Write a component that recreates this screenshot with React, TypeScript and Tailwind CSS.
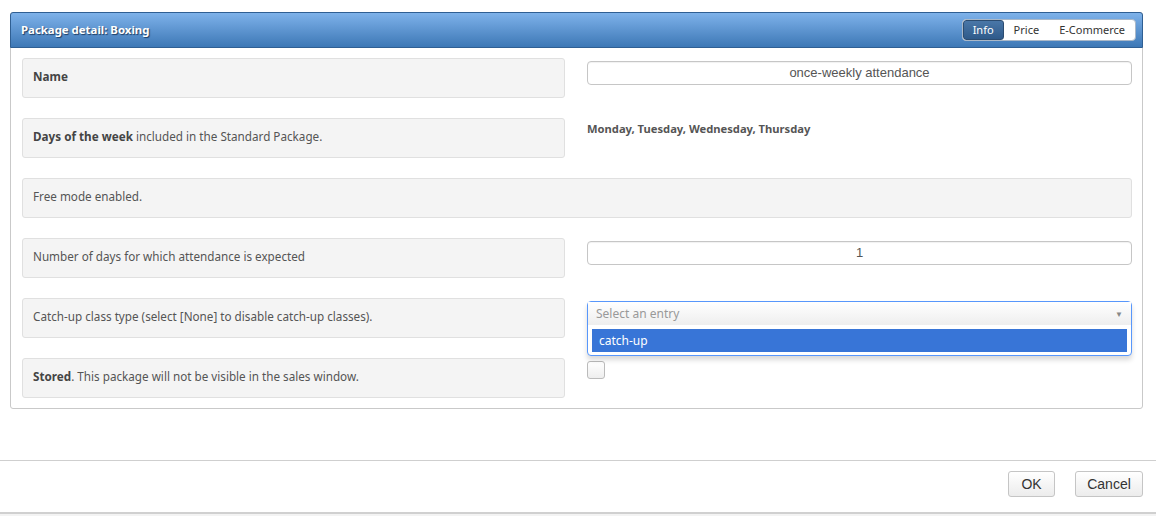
import React from 'react'

const labelBox =
  'h-[40px] flex items-center px-[10px] pb-[3px] bg-[#f4f4f4] border border-[#e0e0e0] rounded-[3px] text-[11.7px] text-[#555]'

const inputClass =
  'w-full h-[24px] rounded-[4px] border border-[#c6c6c6] bg-white text-center text-[13px] text-[#555] font-["Liberation_Sans",Arial,sans-serif] shadow-[inset_0_1px_1px_rgba(0,0,0,0.06)]'

function Row({ label, children }: { label: React.ReactNode; children?: React.ReactNode }) {
  return (
    <div className="flex gap-[22px]">
      <div className={`${labelBox} w-[543px] shrink-0`}>{label}</div>
      <div className="flex-1">{children}</div>
    </div>
  )
}

export default function App() {
  return (
    <div className="w-[1156px] h-[516px] bg-white font-['Noto_Sans',sans-serif] relative overflow-hidden">
      <div className="pt-[12px] px-[10px] pr-[13px]">
        <div className="border border-[#c9c9c9] rounded-[3px] h-[397px]">
          <div className="h-[36px] -mx-px -mt-px flex items-center justify-between px-[10px] pr-[6px] rounded-t-[3px] border border-[#2f5f93] bg-gradient-to-b from-[#7eb2ea] to-[#3d78b6]">
            <span className="text-white text-[11.4px] font-bold [text-shadow:1px_1px_1px_#1d3d63]">
              Package detail: Boxing
            </span>
            <div className="flex h-[22px] bg-white rounded-[4px] border border-[#aab8c8] text-[11px] text-[#333] overflow-hidden">
              <span className="px-[9px] flex items-center bg-gradient-to-b from-[#4a77a8] to-[#2f5a8a] text-white border border-[#2c4c70] rounded-[3px]">
                Info
              </span>
              <span className="px-[10px] flex items-center">Price</span>
              <span className="px-[10px] flex items-center">E-Commerce</span>
            </div>
          </div>

          <div className="pl-[11px] pr-[10px] pt-[10px] flex flex-col gap-[20px]">
            <Row label={<b className="text-[#444]">Name</b>}>
              <div className="pt-[3px]">
                <div className={`${inputClass} flex items-center justify-center`}>once-weekly attendance</div>
              </div>
            </Row>
            <Row
              label={
                <span>
                  <b className="text-[#444]">Days of the week</b> included in the Standard Package.
                </span>
              }
            >
              <div className="pt-[3px] text-[11.2px] font-bold text-[#555]">Monday, Tuesday, Wednesday, Thursday</div>
            </Row>
            <div className={labelBox}>Free mode enabled.</div>
            <Row label="Number of days for which attendance is expected">
              <div className="pt-[3px]">
                <div className={`${inputClass} flex items-center justify-center`}>1</div>
              </div>
            </Row>
            <Row label="Catch-up class type (select [None] to disable catch-up classes).">
              <div className="pt-[3px] relative z-10">
                <div className="absolute left-0 right-0 top-[3px] border border-[#5897fb] rounded-[4px] bg-white shadow-[0_4px_5px_rgba(0,0,0,0.15)]">
                  <div className="h-[23px] flex items-center justify-between pl-[8px] pr-[8px] bg-gradient-to-b from-[#ffffff] to-[#eeeeee] text-[12px] text-[#999]">
                    <span>Select an entry</span>
                    <span className="text-[8px] text-[#888]">▼</span>
                  </div>
                  <div className="px-[4px] pt-[4px] pb-[3px]">
                    <div className="h-[23px] flex items-center px-[7px] bg-[#3875d7] text-white text-[12px]">catch-up</div>
                  </div>
                </div>
              </div>
            </Row>
            <Row
              label={
                <span>
                  <b className="text-[#444]">Stored</b>. This package will not be visible in the sales window.
                </span>
              }
            >
              <div className="pt-[3px]">
                <div className="w-[18px] h-[18px] border border-[#bbb] rounded-[3px] bg-gradient-to-b from-white to-[#eee]" />
              </div>
            </Row>
          </div>
        </div>
      </div>

      <div className="mt-[51px] border-t border-[#cfcfcf] h-[52px] flex items-start pt-[10px] justify-end gap-[20px] pr-[13px]">
        <button className="h-[26px] w-[47px] rounded-[3px] border border-[#c5c5c5] bg-gradient-to-b from-white to-[#ececec] text-[14px] text-[#333] font-['Liberation_Sans',Arial,sans-serif]">
          OK
        </button>
        <button className="h-[26px] w-[68px] rounded-[3px] border border-[#c5c5c5] bg-gradient-to-b from-white to-[#ececec] text-[14px] text-[#333] font-['Liberation_Sans',Arial,sans-serif]">
          Cancel
        </button>
      </div>
      <div className="border-t-2 border-[#d0d0d0] h-[4px] bg-[#f3f3f3]" />
    </div>
  )
}
